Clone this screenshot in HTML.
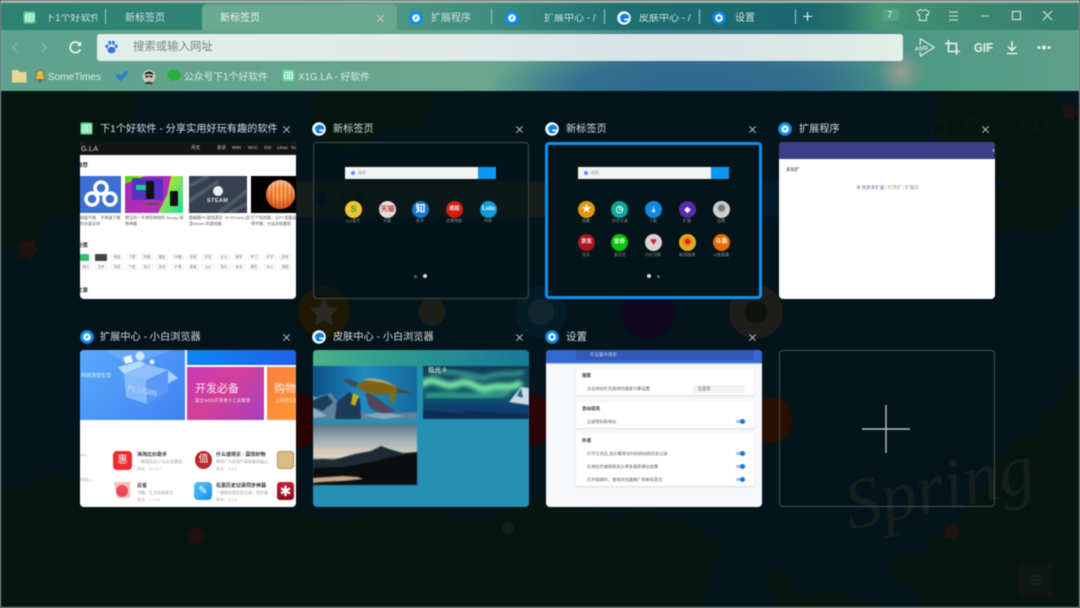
<!DOCTYPE html>
<html lang="zh"><head><meta charset="utf-8"><title>下1个好软件</title>
<style>
*{box-sizing:border-box}
html,body{margin:0;padding:0;background:#04151a}
#p{position:relative;width:1080px;height:608px;overflow:hidden;font-family:"Liberation Sans","Noto Sans CJK SC",sans-serif;filter:blur(.5px);background:#04151a}
.a,.t,.x{position:absolute}
.t{white-space:nowrap;line-height:1}
.ti{font-size:10.2px;color:#d8dcdc;top:125px}
.card{position:absolute;width:216px;height:157px;border-radius:4px;overflow:hidden}
.tab{font-size:10px;color:#cfe0dc;top:14px}
.sep{position:absolute;top:9px;width:1px;height:15px;background:#a5c8c0}
.lab{position:absolute;font-size:4px;color:#8a9496;line-height:1;white-space:nowrap;transform:translateX(-50%)}
.c{position:absolute;width:17px;height:17px;border-radius:50%;color:#fff;font-size:7px;font-weight:bold;text-align:center;line-height:17px}
.sb{position:absolute;height:12px;width:151px;background:#f2f4f4}
.sb b{position:absolute;right:0;top:0;width:18px;height:12px;background:#0a98f2}
.sb i{position:absolute;left:6px;top:4px;width:4px;height:4px;border-radius:50%;background:#6d8cf0}
.sb span{position:absolute;left:13px;top:4px;font-size:4px;line-height:1;color:#999;font-style:normal}
.tx{position:absolute;font-size:4.6px;line-height:1;color:#555;white-space:nowrap}
.tg{position:absolute;width:12px;height:6px;border:1px solid #eee;font-size:3.5px;line-height:4px;text-align:center;color:#777;border-radius:1px}
.sec{position:absolute;left:30px;width:178px;background:#fff;box-shadow:0 1px 2px rgba(0,0,0,.12)}
.sw{position:absolute;right:9px;width:9px;height:3px;border-radius:2px;background:#9cc0f4}
.sw:after{content:"";position:absolute;right:0;top:-1px;width:5px;height:5px;border-radius:50%;background:#1a73e8}
.ph{filter:blur(.5px)}
</style></head><body><div id="p">

<svg width="0" height="0" style="position:absolute"><defs>
<symbol id="ib" viewBox="0 0 14 14"><circle cx="7" cy="7" r="6.8" fill="#0a8cf5"/><circle cx="7" cy="7" r="3.8" fill="#fff"/><path d="M8.8 5.2 7.7 7.7 5.2 8.8 6.3 6.3z" fill="#0a8cf5"/></symbol>
<symbol id="ie" viewBox="0 0 14 14"><circle cx="7" cy="7" r="6.8" fill="#f4fbff"/><path d="M2.4 8.3C2.6 4.2 6 2.2 9 2.9c2.4.6 3.4 2.7 3 4.6H6.6c.2 1.7 2.6 2.6 5 1.4-1.200 2.300-4.700 3.300-6.800 1.800-1.500-1-1.600-3-.4-4.400-.8.500-1.500 1.300-2 2.000z" fill="#0b7fe0"/></symbol>
<symbol id="ig" viewBox="0 0 14 14"><circle cx="7" cy="7" r="6.8" fill="#0a86f0"/><path d="M7 2.800 10.600 4.900V9.100L7 11.200 3.400 9.100V4.900z" fill="#fff"/><circle cx="7" cy="7" r="1.700" fill="#0a86f0"/></symbol>
<symbol id="ix" viewBox="0 0 14 14"><rect x=".5" y=".5" width="13" height="13" rx="2" fill="#5ed29a"/><path d="M4 3.500h6a1 1 0 0 1 1 1v5a1 1 0 0 1-1 1H4a1 1 0 0 1-1-1v-5a1 1 0 0 1 1-1z" fill="none" stroke="#fff" stroke-width="1.200"/><circle cx="7" cy="7" r="1.600" fill="none" stroke="#fff" stroke-width="1"/></symbol>
<symbol id="cl" viewBox="0 0 10 10"><path d="M1.500 1.500l7 7M8.500 1.500l-7 7" stroke="#c9cfcf" stroke-width="1" fill="none"/></symbol>
</defs></svg>

<!-- dark background art -->
<svg class="a" style="left:0;top:91px" width="1080" height="517" viewBox="0 91 1080 517">
<rect x="0" y="91" width="1080" height="517" fill="#03141a"/>
<g fill="#06150f">
<circle cx="30" cy="130" r="55"/><circle cx="95" cy="105" r="40"/><circle cx="15" cy="210" r="36"/><circle cx="60" cy="195" r="24"/>
<circle cx="350" cy="110" r="38"/><circle cx="400" cy="100" r="30"/>
<circle cx="1000" cy="120" r="62"/><circle cx="1060" cy="160" r="48"/><circle cx="1040" cy="200" r="32"/><circle cx="1000" cy="210" r="22"/>
<path d="M0 490C30 480 50 490 70 500C90 480 130 480 170 505C230 520 280 500 330 520C380 510 420 500 480 525C540 480 580 510 620 520C640 500 690 520 720 545L700 608H0z"/>
<circle cx="25" cy="500" r="14"/><circle cx="50" cy="490" r="16"/><circle cx="72" cy="492" r="13"/>
<path d="M410 608C410 560 440 530 480 545C500 515 540 520 560 535C590 520 620 525 640 550L700 608z"/>
<path d="M915 608C920 560 940 545 950 535C960 510 990 480 1010 470C1030 460 1020 440 1035 440C1050 420 1060 410 1060 395C1070 380 1080 380 1080 378V608z"/>
<circle cx="1030" cy="455" r="22"/><circle cx="1055" cy="425" r="16"/><circle cx="1075" cy="400" r="14"/><circle cx="1072" cy="385" r="9"/>
<circle cx="1010" cy="470" r="18"/><circle cx="950" cy="555" r="24"/><circle cx="932" cy="575" r="20"/>
<path d="M770 608c8-16 20-18 28-8 6-8 16-8 22 0 8-12 20-14 30 0 10-6 20-2 28 8z"/>
<circle cx="910" cy="572" r="18"/><circle cx="785" cy="590" r="14"/><circle cx="775" cy="578" r="8"/>
</g>
<!-- search band -->
<rect x="296" y="181" width="429" height="36" fill="#161d1a"/>
<rect x="725" y="181" width="68" height="36" fill="#031a28"/>
<circle cx="752" cy="198" r="5" fill="none" stroke="#122020" stroke-width="1.500"/>
<circle cx="321" cy="198" r="6" fill="#06102a"/>
<text x="340" y="203" font-size="13" fill="#0a1412" font-family="Liberation Sans,Noto Sans CJK SC,sans-serif">搜索</text>
<!-- faint app icons -->
<circle cx="324" cy="312" r="26" fill="#1f1804"/><path d="M324 298l4.500 9 10 1.400-7.200 7 1.700 10-9-4.700-9 4.700 1.700-10-7.200-7 10-1.400z" fill="#2a2925"/>
<circle cx="432" cy="312" r="14" fill="#1d1d19"/>
<circle cx="541" cy="312" r="26" fill="#041b28"/><circle cx="541" cy="312" r="13" fill="#122630"/>
<circle cx="648" cy="312" r="27" fill="#0f0820"/>
<circle cx="756" cy="312" r="27" fill="#1d1d1b"/><circle cx="756" cy="312" r="11" fill="#0e1310"/>
<circle cx="296" cy="420" r="27" fill="#280404"/>
<circle cx="770" cy="420" r="23" fill="#280f02"/>
<circle cx="530" cy="420" r="26" fill="#2a0606"/>
<circle cx="508" cy="528" r="6" fill="#151f1b"/>
<path d="M190 525l6 4 5-3 1 6 5 4-5 3-2 6-6-3-6 1 1-6-4-5 6-1z" fill="#1f1210"/>
<path d="M20 238l8 4 6-3 1 7 5 5-6 3-3 7-6-4-7 1 2-7-4-6 6-1z" fill="#1f1210"/>
<path d="M945 523l6 3 5-2 1 5 4 4-4 3-2 5-5-3-5 1 1-5-3-5 5-1z" fill="#1f1210"/>
<path d="M1063 103l6 3 5-2 1 5 4 4-4 3-2 5-5-3-5 1 1-5-3-5 5-1z" fill="#1f1210"/>
<rect x="1018" y="563" width="34" height="34" fill="#0f1613"/>
<path d="M1030 576h12M1030 580h12M1030 584h12" stroke="#232925" stroke-width="1"/>
<path d="M931 126l8-7 8 7v8h-16z" fill="none" stroke="#191610" stroke-width="1.500"/>
<circle cx="971" cy="123" r="5" fill="none" stroke="#0f1814" stroke-width="1.500"/>
<text x="1017" y="129" font-size="12" fill="#131a15" font-family="Liberation Sans,Noto Sans CJK SC,sans-serif">个性化</text>
<text x="850" y="530" font-size="72" font-style="italic" fill="#161f1e" font-family="Liberation Serif,serif" transform="rotate(-12 850 530)">Spring</text>
</svg>

<!-- top chrome -->
<div class="a" style="left:0;top:0;width:1080px;height:91px;background:
radial-gradient(ellipse 24px 24px at 901px 72px,rgba(170,160,150,.75),rgba(170,160,150,0) 100%),
radial-gradient(ellipse 200px 50px at 690px 88px,#2f6a90 0,rgba(47,106,144,.85) 55%,rgba(47,106,144,0) 100%),
linear-gradient(90deg,#5ea28e 0,#67a58f 350px,#6aa78f 480px,#5a9c8c 560px,#44858c 640px,#417f8a 820px,#4f9a84 930px,#5f9f8a 1080px)"></div>
<div class="a" style="left:0;top:3px;width:1080px;height:27px;background:linear-gradient(90deg,#2e8272 0,#2f8474 200px,#4c9683 400px,#3f8e80 480px,#1f7072 620px,#1a676e 800px,#25716e 840px,#489878 880px,#3e8c72 930px,#35806f 1080px)"></div>
<div class="a" style="left:0;top:0;width:1080px;height:3px;background:#9fb0a8"></div>
<div class="a" style="left:0;top:0;width:1px;height:608px;background:#9aa09c"></div>
<div class="a" style="right:0;top:0;width:1px;height:608px;background:#9aa09c"></div>
<div class="a" style="left:0;bottom:0;width:1080px;height:1px;background:#9aa09c"></div>

<!-- tabs -->
<div class="a" style="left:202px;top:4px;width:195px;height:27px;background:#69a990;border-radius:5px 5px 0 0"></div>
<svg class="a" style="left:23px;top:11px" width="13" height="13"><use href="#ix"/></svg>
<div class="t tab" style="left:45px;width:52px;overflow:hidden">下1个好软件</div>
<div class="sep" style="left:105px"></div>
<div class="t tab" style="left:125px">新标签页</div>
<div class="t tab" style="left:220px;color:#eef5f2">新标签页</div>
<svg class="a" style="left:376px;top:14px" width="9" height="9"><use href="#cl"/></svg>
<svg class="a" style="left:409px;top:11px" width="14" height="14"><use href="#ib"/></svg>
<div class="t tab" style="left:431px">扩展程序</div>
<div class="sep" style="left:491px"></div>
<svg class="a" style="left:505px;top:11px" width="14" height="14"><use href="#ib"/></svg>
<div class="t tab" style="left:544px;width:55px;overflow:hidden">扩展中心 - /</div>
<div class="sep" style="left:604px"></div>
<svg class="a" style="left:617px;top:11px" width="14" height="14"><use href="#ie"/></svg>
<div class="t tab" style="left:639px;width:55px;overflow:hidden">皮肤中心 - /</div>
<div class="sep" style="left:699px"></div>
<svg class="a" style="left:712px;top:11px" width="14" height="14"><use href="#ig"/></svg>
<div class="t tab" style="left:735px">设置</div>
<div class="sep" style="left:795px"></div>
<svg class="a" style="left:802px;top:11px" width="11" height="11"><path d="M5.500 1v9M1 5.500h9" stroke="#f0f5f3" stroke-width="1.100"/></svg>
<div class="a" style="left:883px;top:9px;width:16px;height:12px;background:#56a088"></div>
<div class="t" style="left:887px;top:11px;font-size:10px;color:#e8f0ec">7</div>
<svg class="a" style="left:916px;top:8px" width="14" height="14" viewBox="0 0 14 14"><path d="M4.500 1.500 1 3.500l1 3.500 1.500-.5V12.500h7V6.500l1.500.5 1-3.500-3.500-2c-.5 1.500-4 1.500-4.500 0z" fill="none" stroke="#dfe9e5" stroke-width="1"/></svg>
<svg class="a" style="left:948px;top:10px" width="11" height="12"><path d="M1 2h9M1 6h9M1 10h9" stroke="#d5e2de" stroke-width="1.100"/></svg>
<svg class="a" style="left:980px;top:10px" width="10" height="12"><path d="M1 6h8" stroke="#b7d0ca" stroke-width="1"/></svg>
<svg class="a" style="left:1011px;top:10px" width="11" height="11"><rect x="1.500" y="1.500" width="8" height="8" fill="none" stroke="#dbe7e3" stroke-width="1.100"/></svg>
<svg class="a" style="left:1042px;top:10px" width="11" height="11"><path d="M1 1l9 9M10 1l-9 9" stroke="#dbe7e3" stroke-width="1"/></svg>

<!-- toolbar -->
<svg class="a" style="left:10px;top:41px" width="10" height="13"><path d="M7.500 2 2.500 6.500 7.500 11" fill="none" stroke="#82b5a6" stroke-width="1.200"/></svg>
<svg class="a" style="left:39px;top:41px" width="10" height="13"><path d="M2.500 2 7.500 6.500 2.500 11" fill="none" stroke="#82b5a6" stroke-width="1.200"/></svg>
<svg class="a" style="left:68px;top:40px" width="15" height="15" viewBox="0 0 15 15"><path d="M12.300 9.500A5.300 5.300 0 1 1 11.500 3.900" fill="none" stroke="#eef5f2" stroke-width="1.700"/><path d="M13.200 1.500V6H8.800z" fill="#eef5f2"/></svg>
<div class="a" style="left:97px;top:34px;width:806px;height:27px;border-radius:3px;background:linear-gradient(90deg,#e2efe9 0,#e0ebe8 300px,#d8e3e8 580px,#dde8e6 700px,#e3efe8 806px)"></div>
<svg class="a" style="left:105px;top:40px" width="13" height="14" viewBox="0 0 13 14" fill="#3f6fe8"><ellipse cx="6.500" cy="10" rx="3.900" ry="3.300"/><ellipse cx="4.800" cy="2.800" rx="1.400" ry="2.100"/><ellipse cx="8.400" cy="2.800" rx="1.400" ry="2.100"/><ellipse cx="1.800" cy="6.300" rx="1.400" ry="1.900"/><ellipse cx="11.200" cy="6.300" rx="1.400" ry="1.900"/></svg>
<div class="t" style="left:133px;top:42px;font-size:11.400px;color:#7d8685">搜索或输入网址</div>
<svg class="a" style="left:914px;top:37px" width="22" height="21" viewBox="0 0 22 21"><path d="M6 8 6.500 1.800 20 10.500 6.500 19 6 15" fill="none" stroke="#e0ece8" stroke-width="1.200"/><text x="1" y="13" font-size="5.500" font-weight="bold" fill="#e8f2ee" font-family="Liberation Sans,sans-serif" transform="rotate(-6 8 12)">ASSI</text></svg>
<svg class="a" style="left:945px;top:40px" width="15" height="15" viewBox="0 0 15 15"><path d="M3.500 0v11.500H15M0 3.500h11.500V15" fill="none" stroke="#e8f2ee" stroke-width="1.600"/></svg>
<div class="t" style="left:974px;top:41px;font-size:13px;font-weight:bold;color:#e4efeb;transform:scaleX(.88);transform-origin:0 0">GIF</div>
<svg class="a" style="left:1005px;top:40px" width="14" height="15" viewBox="0 0 14 15"><path d="M7 1v9M3 6.500 7 10.500 11 6.500M2 13.500h10" fill="none" stroke="#e8f2ee" stroke-width="1.500"/></svg>
<svg class="a" style="left:1036px;top:44px" width="16" height="7"><circle cx="3" cy="3.500" r="1.500" fill="#e8f2ee"/><circle cx="8" cy="3.500" r="2" fill="#e8f2ee"/><circle cx="13" cy="3.500" r="1.500" fill="#e8f2ee"/></svg>

<!-- bookmarks -->
<svg class="a" style="left:12px;top:69px" width="15" height="14"><path d="M0 1h6l1.500 2H14.500V13.500H0z" fill="#e6d894"/></svg>
<svg class="a" style="left:34px;top:70px" width="12" height="13" viewBox="0 0 12 13"><path d="M6 .5c2.500 0 3.500 2 3.500 4.500 0 2.500 1.500 3.500 1.500 4.500H1C1 8.500 2.500 7.500 2.500 5 2.500 2.500 3.500.5 6 .5z" fill="#eabb3c" stroke="#7a6424" stroke-width=".7"/><circle cx="6" cy="11" r="1.300" fill="#7a6424"/></svg>
<div class="t" style="left:48px;top:73px;font-size:10px;color:#dcebe5">SomeTimes</div>
<svg class="a" style="left:115px;top:70px" width="14" height="13" viewBox="0 0 14 13"><path d="M.5 6 3.500 3.500 6 6 11 .5 13.500 2.500 6 11.500z" fill="#2f7fd0"/></svg>
<svg class="a" style="left:142px;top:69px" width="14" height="15" viewBox="0 0 14 15"><circle cx="7" cy="7.500" r="6.500" fill="#c9c6b4"/><path d="M2.500 6C3 1.500 11 1.500 11.500 6 9 4.500 5 4.500 2.500 6z" fill="#1c1c1c"/><rect x="3.500" y="6.500" width="3" height="2" fill="#333"/><rect x="7.500" y="6.500" width="3" height="2" fill="#333"/><path d="M3 15c0-3 8-3 8 0z" fill="#333"/></svg>
<svg class="a" style="left:167px;top:69px" width="14" height="13" viewBox="0 0 14 13"><ellipse cx="7" cy="6" rx="6.800" ry="5.500" fill="#2aae3c"/><path d="M3 10v3l3-2z" fill="#2aae3c"/></svg>
<div class="t" style="left:184px;top:73px;font-size:9.800px;color:#dcebe5">公众号下1个好软件</div>
<svg class="a" style="left:282px;top:69px" width="13" height="13"><use href="#ix"/></svg>
<div class="t" style="left:298px;top:73px;font-size:9.800px;color:#dcebe5">X1G.LA - 好软件</div>

<!-- titles row 1 -->
<svg class="a" style="left:80px;top:122px" width="13" height="13"><use href="#ix"/></svg>
<div class="t ti" style="left:100px">下1个好软件 - 分享实用好玩有趣的软件</div>
<svg class="a" style="left:282px;top:125px" width="9" height="9"><use href="#cl"/></svg>
<svg class="a" style="left:312px;top:122px" width="14" height="14"><use href="#ie"/></svg>
<div class="t ti" style="left:333px">新标签页</div>
<svg class="a" style="left:515px;top:125px" width="9" height="9"><use href="#cl"/></svg>
<svg class="a" style="left:545px;top:122px" width="14" height="14"><use href="#ie"/></svg>
<div class="t ti" style="left:566px">新标签页</div>
<svg class="a" style="left:748px;top:125px" width="9" height="9"><use href="#cl"/></svg>
<svg class="a" style="left:778px;top:122px" width="14" height="14"><use href="#ib"/></svg>
<div class="t ti" style="left:799px">扩展程序</div>
<svg class="a" style="left:981px;top:125px" width="9" height="9"><use href="#cl"/></svg>

<!-- titles row 2 -->
<svg class="a" style="left:80px;top:330px" width="14" height="14"><use href="#ib"/></svg>
<div class="t ti" style="left:100px;top:333px">扩展中心 - 小白浏览器</div>
<svg class="a" style="left:282px;top:333px" width="9" height="9"><use href="#cl"/></svg>
<svg class="a" style="left:312px;top:330px" width="14" height="14"><use href="#ie"/></svg>
<div class="t ti" style="left:333px;top:333px">皮肤中心 - 小白浏览器</div>
<svg class="a" style="left:515px;top:333px" width="9" height="9"><use href="#cl"/></svg>
<svg class="a" style="left:545px;top:330px" width="14" height="14"><use href="#ig"/></svg>
<div class="t ti" style="left:566px;top:332px;font-size:10.500px">设置</div>
<svg class="a" style="left:748px;top:333px" width="9" height="9"><use href="#cl"/></svg>

<!-- card 1 -->
<div class="card" style="left:80px;top:142px;background:#fff">
<div class="a" style="left:0;top:0;width:216px;height:13px;background:#141414"></div>
<div class="t" style="left:1px;top:3px;font-size:7.500px;color:#d8d8d8">G.LA</div>
<div class="t" style="left:111px;top:4px;font-size:4.500px;color:#ccc">月花</div>
<div class="t" style="left:137px;top:4px;font-size:4.500px;color:#ccc">安卓</div>
<div class="t" style="left:152px;top:4px;font-size:4.500px;color:#ccc">WIN</div>
<div class="t" style="left:168px;top:4px;font-size:4.500px;color:#ccc">MAC</div>
<div class="t" style="left:184px;top:4px;font-size:4.500px;color:#ccc">iOS</div>
<div class="t" style="left:197px;top:4px;font-size:4.500px;color:#ccc">Linux</div>
<div class="t" style="left:211px;top:4px;font-size:4.500px;color:#ccc">Soft</div>
<div class="t" style="left:-3px;top:22px;font-size:5.500px;font-weight:bold;color:#333">推荐</div>
<div class="a" style="left:0;top:34px;width:41px;height:37px;background:#3d70d2"><svg width="41" height="37" viewBox="0 0 41 37"><g fill="none" stroke="#fff" stroke-width="3.500"><circle cx="12" cy="23" r="6"/><circle cx="30" cy="23" r="6"/><circle cx="21" cy="12" r="6"/></g></svg></div>
<div class="a" style="left:45px;top:34px;width:58px;height:37px;overflow:hidden;background:linear-gradient(120deg,#4ad317 0,#b6e815 35%,#e4e310 45%,#12e0a0 100%)"><svg width="58" height="37"><path d="M20 0H46L42 19 33 37H0V8z" fill="#b018c8" opacity=".9"/><rect x="7" y="2" width="31" height="22" rx="1" fill="#5232c0"/><rect x="11" y="9" width="16" height="5" fill="#1ccb9a"/><rect x="21" y="5" width="8" height="18" rx="1" fill="#111"/><rect x="45" y="15" width="8" height="15" rx="1" fill="#111"/><path d="M20 28H34" stroke="#555" stroke-width="2"/></svg></div>
<div class="a" style="left:109px;top:34px;width:58px;height:37px;background:#36404e"><svg width="58" height="37"><path d="M0 10 20 0M0 25 30 5M30 37 58 15M40 37 58 28" stroke="#4d5a68" stroke-width="4"/><circle cx="29" cy="15" r="5" fill="#eee"/></svg><div class="t" style="left:18px;top:23px;font-size:5.500px;font-weight:bold;color:#e4e4e4;letter-spacing:.4px">STEAM</div></div>
<div class="a" style="left:171px;top:34px;width:45px;height:37px;background:#000"><div class="a" style="left:15px;top:4px;width:29px;height:29px;border-radius:50%;background:repeating-linear-gradient(90deg,#f2791f 0 3px,#fbd2a8 3px 4px);box-shadow:inset 0 -6px 8px rgba(200,60,0,.7),inset 0 4px 6px rgba(255,255,255,.4)"></div></div>
<div class="tx" style="left:0;top:74px;font-size:4px">网盘不限... 不限速下载</div><div class="tx" style="left:0;top:80px;font-size:4px">的全面支持</div>
<div class="tx" style="left:45px;top:74px;font-size:4px">想当你一手神奇神到听 Scrcpy 投</div><div class="tx" style="left:45px;top:80px;font-size:4px">券神器</div>
<div class="tx" style="left:109px;top:74px;font-size:4px">超级酷PC游戏清空（F:XCrons )自</div><div class="tx" style="left:109px;top:80px;font-size:4px">游Steam 的游戏箱</div>
<div class="tx" style="left:171px;top:74px;font-size:4px">打个短线器：让PT流量运</div><div class="tx" style="left:171px;top:80px;font-size:4px">得早期，力运发挥圈到</div>
<div class="t" style="left:-3px;top:102px;font-size:5.500px;font-weight:bold;color:#333">分类</div>
<div class="a" style="left:0;top:112px;width:9px;height:7px;background:#2dc36a;border-radius:1px"></div>
<div class="a" style="left:15px;top:112px;width:12px;height:7px;background:#444;border-radius:1px"></div>
<div class="tg" style="left:31px;top:112px">电影</div><div class="tg" style="left:46px;top:112px">下载</div><div class="tg" style="left:61px;top:112px">网盘</div><div class="tg" style="left:76px;top:112px">播放</div><div class="tg" style="left:92px;top:112px">IM器</div><div class="tg" style="left:107px;top:112px">系统</div><div class="tg" style="left:122px;top:112px">开发</div><div class="tg" style="left:138px;top:112px">办公</div><div class="tg" style="left:153px;top:112px">美学</div><div class="tg" style="left:168px;top:112px">学习</div><div class="tg" style="left:184px;top:112px">杜学</div><div class="tg" style="left:199px;top:112px">游戏</div>
<div class="tg" style="left:0;top:122px">图片</div><div class="tg" style="left:15px;top:122px">文件</div><div class="tg" style="left:31px;top:122px">浏览</div><div class="tg" style="left:46px;top:122px">个性</div><div class="tg" style="left:61px;top:122px">笔记</div><div class="tg" style="left:76px;top:122px">资讯</div><div class="tg" style="left:92px;top:122px">扩展</div><div class="tg" style="left:107px;top:122px">桌面</div><div class="tg" style="left:122px;top:122px">App</div><div class="tg" style="left:138px;top:122px">音乐</div><div class="tg" style="left:153px;top:122px">安全</div><div class="tg" style="left:168px;top:122px">硬件</div><div class="tg" style="left:184px;top:122px">办公</div><div class="tg" style="left:199px;top:122px">视频</div>
<div class="t" style="left:-3px;top:147px;font-size:5.500px;font-weight:bold;color:#333">文章</div>
</div>

<!-- card 2 -->
<div class="card" style="left:313px;top:142px;border:1px solid #3e4a4c;background:rgba(3,21,25,.62)"></div>
<div class="sb" style="left:345px;top:167px"><i></i><span>搜索</span><b></b></div>
<div class="c" style="left:345px;top:201px;background:#f1c232;color:#2aa53c;font-size:9px">S</div>
<div class="c" style="left:379px;top:201px;background:#e2dfdc;color:#c83a3a">天猫</div>
<div class="c" style="left:412px;top:201px;background:#1277d0;font-size:10px">知</div>
<div class="c" style="left:446px;top:201px;background:#d0200c;font-size:5px">携程</div>
<div class="c" style="left:480px;top:201px;background:#0f9bd6;font-size:6px">Lulu</div>
<div class="lab" style="left:353px;top:219px">QQ音乐</div><div class="lab" style="left:387px;top:219px">天猫</div><div class="lab" style="left:420px;top:219px">知乎</div><div class="lab" style="left:454px;top:219px">去哪网盘</div><div class="lab" style="left:488px;top:219px">哔哩</div>
<div class="a" style="left:414px;top:275px;width:3px;height:3px;border-radius:50%;background:#56666a"></div>
<div class="a" style="left:423px;top:274px;width:4px;height:4px;border-radius:50%;background:#d4dadb"></div>

<!-- card 3 -->
<div class="card" style="left:545px;top:142px;width:217px;border:3px solid #0a93f0;background:#041519"></div>
<div class="sb" style="left:578px;top:167px"><i></i><span>搜索</span><b></b></div>
<div class="c" style="left:578px;top:201px;background:#e2960c;font-size:10px">★</div>
<div class="c" style="left:611px;top:201px;background:#0ea79c;font-size:9px">◷</div>
<div class="c" style="left:645px;top:201px;background:#1487d8;font-size:8px">⤓</div>
<div class="c" style="left:679px;top:201px;background:#5a2ba8;font-size:8px">◈</div>
<div class="c" style="left:713px;top:201px;background:#cfcfcf;color:#777;font-size:11px">✹</div>
<div class="c" style="left:578px;top:234px;background:#ae1420;font-size:5.500px">京东</div>
<div class="c" style="left:611px;top:234px;background:#07c50c;font-size:5.500px;color:#fff">爱奇</div>
<div class="c" style="left:645px;top:234px;background:#d9d2d0;color:#c4283c;font-size:11px">♥</div>
<div class="c" style="left:679px;top:234px;background:#e6ab1c;color:#d81e1e;font-size:9px">◉</div>
<div class="c" style="left:713px;top:234px;background:#e36c04;font-size:6px">斗鱼</div>
<div class="lab" style="left:586px;top:219px">收藏</div><div class="lab" style="left:620px;top:219px">历史记录</div><div class="lab" style="left:653px;top:219px">下载</div><div class="lab" style="left:687px;top:219px">扩展</div><div class="lab" style="left:721px;top:219px">设置</div>
<div class="lab" style="left:586px;top:253px">京东</div><div class="lab" style="left:620px;top:253px">爱奇艺</div><div class="lab" style="left:653px;top:253px">小红书网</div><div class="lab" style="left:687px;top:253px">新浪微博</div><div class="lab" style="left:721px;top:253px">斗鱼直播</div>
<div class="a" style="left:647px;top:274px;width:4px;height:4px;border-radius:50%;background:#d4dadb"></div>
<div class="a" style="left:657px;top:275px;width:3px;height:3px;border-radius:50%;background:#56666a"></div>

<!-- card 4 -->
<div class="card" style="left:779px;top:142px;background:#fff">
<div class="a" style="left:0;top:0;width:216px;height:17px;background:#3c3f86"></div>
<div class="a" style="left:214px;top:7px;width:1px;height:3px;background:#cfd0e4"></div>
<div class="t" style="left:7px;top:26px;font-size:4.500px;color:#333">未知扩</div>
<div class="t" style="left:77px;top:44px;font-size:4.500px;color:#7a5aa8">寻 找更多扩展<span style="color:#888">  / 打开扩 / 扩展页</span></div>
</div>

<!-- card 5 -->
<div class="card" style="left:80px;top:350px;background:#fff">
<div class="a" style="left:0;top:0;width:105px;height:70px;background:linear-gradient(135deg,#5aa8fb,#3f83f2)"><svg width="105" height="70" viewBox="0 0 105 70"><path d="M25 0 50 16 92 0z" fill="#7cb8fd" opacity=".5"/><path d="M44 24 66 30 88 20 66 14z" fill="#8dc0fc"/><path d="M44 24 38 17 60 11 66 14z" fill="#b8dafe"/><path d="M88 20 98 28 84 36 76 27z" fill="#a8d0fd"/><path d="M44 24 66 30 67 54 46 47z" fill="#86bbfa"/><path d="M66 30 88 20 88 42 67 54z" fill="#5a97f6"/><rect x="44" y="6" width="8" height="7" fill="#eef6ff" transform="rotate(-15 48 9)"/><circle cx="60" cy="6" r="4.500" fill="#cfe6ff"/><circle cx="72" cy="12" r="2.500" fill="#e4f1ff"/><text x="47" y="40" font-size="8" font-weight="bold" fill="#a9cffc" font-family="Liberation Sans,sans-serif" transform="rotate(12 47 40)">PLUGIN</text></svg><div class="t" style="left:1px;top:24px;font-size:5px;color:#e8f3ff">科技改变生活</div></div>
<div class="a" style="left:107px;top:0;width:109px;height:15px;background:linear-gradient(90deg,#0b88f0,#2060ec)"></div>
<div class="a" style="left:107px;top:17px;width:77px;height:53px;background:linear-gradient(135deg,#c83ab8 0,#d24098 45%,#a93fc0 100%)"><div class="t" style="left:8px;top:17px;font-size:11px;color:#fbe8f4">开发必备</div><div class="t" style="left:8px;top:32px;font-size:4.500px;color:#f5d8ee">最全WEB开发者小工具集锦</div></div>
<div class="a" style="left:187px;top:17px;width:29px;height:53px;background:linear-gradient(135deg,#fb7a40,#ff9a34);overflow:hidden"><div class="t" style="left:7px;top:17px;font-size:11px;color:#ffeedd">购物神器</div><div class="t" style="left:8px;top:32px;font-size:4.500px;color:#ffe6d0">上网更实惠</div></div>
<div class="tx" style="left:0;top:103px;font-size:4px;color:#aaa">yrro...</div>
<div class="a" style="left:33px;top:101px;width:19px;height:19px;background:#ee2b2f;border-radius:4px;color:#fff;font-size:10px;line-height:19px;text-align:center">惠</div>
<div class="tx" style="left:57px;top:103px;font-size:5px;color:#333;font-weight:bold">海淘比价助手</div>
<div class="tx" style="left:57px;top:110px;font-size:4px;color:#999">一款国货出口 比价优惠领...</div>
<div class="tx" style="left:57px;top:117px;font-size:4px;color:#aaa">版本：4.2.3.7</div>
<div class="a" style="left:115px;top:101px;width:17px;height:18px;background:#b6282a;border-radius:50%;color:#fff;font-size:10px;line-height:18px;text-align:center">值</div>
<div class="tx" style="left:136px;top:103px;font-size:5px;color:#333;font-weight:bold">什么值得买 · 震惊好物</div>
<div class="tx" style="left:136px;top:110px;font-size:4px;color:#999">帮你广大的用户高效省钱省心...</div>
<div class="tx" style="left:136px;top:117px;font-size:4px;color:#aaa">版本：3.2.2</div>
<div class="a" style="left:197px;top:101px;width:17px;height:18px;background:#d9bd82;border:1px solid #b08d4c;border-radius:3px"></div>
<div class="tx" style="left:0;top:128px;font-size:4px;color:#aaa">的插入...</div>
<div class="a" style="left:34px;top:132px;width:16px;height:16px;background:#f8bdbd;clip-path:polygon(0 0,100% 0,100% 100%,20% 100%)"></div>
<div class="a" style="left:36px;top:135px;width:12px;height:12px;background:#e84c5c;border-radius:50%"></div>
<div class="tx" style="left:57px;top:134px;font-size:5px;color:#333;font-weight:bold">云雀</div>
<div class="tx" style="left:57px;top:141px;font-size:4px;color:#999">书籍，生活化阅读法</div>
<div class="tx" style="left:57px;top:148px;font-size:4px;color:#aaa">版本：1.1.51</div>
<div class="a" style="left:114px;top:132px;width:18px;height:18px;background:linear-gradient(135deg,#54c4f6,#1a8eec);border-radius:4px;color:#fff;font-size:11px;line-height:18px;text-align:center">✎</div>
<div class="tx" style="left:136px;top:134px;font-size:5px;color:#333;font-weight:bold">石墨历史记录同步神器</div>
<div class="tx" style="left:136px;top:141px;font-size:4px;color:#999">一键保存到历史记录，同步备...</div>
<div class="tx" style="left:136px;top:148px;font-size:4px;color:#aaa">版本：3.1.3</div>
<div class="a" style="left:197px;top:132px;width:17px;height:18px;background:linear-gradient(#c52030,#8e1020);border-radius:3px;color:#fff;font-size:14px;line-height:18px;text-align:center">✱</div>
</div>

<!-- card 6 -->
<div class="card" style="left:313px;top:350px;background:#2490b4">
<div class="a" style="left:0;top:0;width:216px;height:16px;background:linear-gradient(90deg,#4db287 0,#2f9c90 35%,#157a99 100%)"></div>
<svg class="a ph" style="left:0;top:16px" width="104" height="53" viewBox="0 0 104 53"><defs><linearGradient id="sea" x1="0" y1="0" x2="1" y2="0"><stop offset="0" stop-color="#0d4f86"/><stop offset=".5" stop-color="#1d8cc2"/><stop offset="1" stop-color="#14689c"/></linearGradient></defs><rect width="104" height="53" fill="url(#sea)"/><path d="M0 32 18 27 28 40 58 48 104 46V53H0z" fill="#5f819c"/><path d="M0 30 8 34 4 44 14 50 0 52z" fill="#a8c0d0" opacity=".7"/><path d="M50 49 70 46 92 50 70 53z" fill="#a8c0d0" opacity=".6"/><path d="M24 36 36 26 47 33 48 53H22z" fill="#1d3a58"/><path d="M0 34 14 29 20 36 10 45 0 42z" fill="#1c3e5c"/><path d="M44 21C48 13 62 12 78 18 88 22 86 28 78 28 66 30 52 28 44 21z" fill="#7e6416"/><path d="M50 14C56 11 70 12 84 21 72 16 60 15 50 14z" fill="#bba878"/><path d="M29 14 37 13 46 17 42 22z" fill="#3e4e5c"/><path d="M52 27C58 26 66 34 82 45 72 50 60 46 56 40z" fill="#52465e"/><path d="M40 27 46 30 42 40 38 38z" fill="#c4b01c"/><path d="M78 26 84 29 80 38 76 34z" fill="#7a7024"/><path d="M84 22 100 27 84 27z" fill="#4a4a3c"/></svg>
<svg class="a ph" style="left:110px;top:16px" width="106" height="53" viewBox="0 0 106 53"><defs><linearGradient id="au" x1="0" y1="0" x2="0" y2="1"><stop offset="0" stop-color="#123a52"/><stop offset=".55" stop-color="#0f5a6c"/><stop offset=".8" stop-color="#0d3f70"/><stop offset="1" stop-color="#0a3a6c"/></linearGradient><filter id="bl"><feGaussianBlur stdDeviation="2"/></filter></defs><rect width="106" height="53" fill="url(#au)"/><g filter="url(#bl)" fill="none" stroke-linecap="round"><path d="M0 18C12 8 20 24 34 18S54 26 66 22 84 24 96 18" stroke="#78e8a8" stroke-width="7"/><path d="M10 6C22 4 40 8 62 12 74 6 88 10 100 6" stroke="#3aa8a0" stroke-width="4"/><path d="M4 30C20 28 50 32 84 28" stroke="#3ab890" stroke-width="4"/></g><path d="M86 36 98 21 106 22V39z" fill="#c8dce8"/><path d="M94 30 98 22 100 32z" fill="#2c5c80"/><path d="M0 41 40 45 106 48V53H0z" fill="#0c2c56"/><path d="M0 41 40 45V47L0 44z" fill="#1b3e66"/></svg>
<div class="t" style="left:115px;top:18px;font-size:6.500px;color:#e4f0f0">极光 9</div>
<svg class="a ph" style="left:0;top:74px" width="104" height="61" viewBox="0 0 104 61"><defs><linearGradient id="sk" x1="0" y1="0" x2="0" y2="1"><stop offset="0" stop-color="#5a7688"/><stop offset=".3" stop-color="#a9b6ba"/><stop offset=".55" stop-color="#e4d6c4"/><stop offset=".6" stop-color="#1c2a30"/></linearGradient></defs><rect width="104" height="61" fill="url(#sk)"/><rect x="0" y="25" width="50" height="1.500" fill="#f0c8a0" opacity=".7"/><path d="M0 36 10 35 20 36 42 30 58 27 68 22 76 25 90 29 104 28V46H0z" fill="#1d2c34"/><path d="M0 44 30 43 60 38 78 33 104 28V61H0z" fill="#0b0d0f"/><path d="M0 54 14 53 30 52 45 53 50 55 30 57 8 58 0 59z" fill="#c8a888"/></svg>
</div>

<!-- card 7 -->
<div class="card" style="left:546px;top:350px;background:#f6f8fb">
<div class="a" style="left:0;top:0;width:216px;height:13px;background:#3469d2"></div>
<div class="a" style="left:30px;top:0;width:178px;height:10px;background:#3258b8"></div>
<div class="a" style="left:0;top:13px;width:216px;height:1px;background:#b4bfd6"></div>
<div class="t" style="left:44px;top:3px;font-size:4.500px;color:#c0d0f0">在设置中搜索</div>
<div class="sec" style="top:20px;height:25px"></div>
<div class="t" style="left:36px;top:24px;font-size:4.500px;font-weight:bold;color:#333">搜索</div>
<div class="t" style="left:41px;top:37px;font-size:4.200px;color:#555">点击地址栏内选择的搜索引擎设置</div>
<div class="a" style="left:147px;top:35px;width:52px;height:8px;background:#f0f1f3"></div>
<div class="t" style="left:152px;top:37px;font-size:4.200px;color:#666">百度等</div>
<div class="sec" style="top:52px;height:26px"></div>
<div class="t" style="left:36px;top:57px;font-size:4.500px;font-weight:bold;color:#333">自动填充</div>
<div class="t" style="left:41px;top:70px;font-size:4.200px;color:#555">记录密码和地址</div>
<div class="sw" style="top:70px;right:17px"></div>
<div class="sec" style="top:84px;height:52px"></div>
<div class="t" style="left:36px;top:89px;font-size:4.500px;font-weight:bold;color:#333">外观</div>
<div class="t" style="left:41px;top:102px;font-size:4.200px;color:#555">打开主页后,显示最常访问的网站和历史记录</div>
<div class="sw" style="top:102px;right:17px"></div>
<div class="t" style="left:41px;top:115px;font-size:4.200px;color:#555">在地址栏搜索框显示更多搜索建议结果</div>
<div class="sw" style="top:115px;right:17px"></div>
<div class="t" style="left:41px;top:128px;font-size:4.200px;color:#555">打开链接时，使用浏览器推广的新标签页</div>
<div class="sw" style="top:128px;right:17px"></div>
</div>

<!-- card 8 -->
<div class="card" style="left:779px;top:350px;border:1px solid #455052"></div>
<svg class="a" style="left:862px;top:405px" width="48" height="48"><path d="M24 0v48M0 24h48" stroke="#b5bfbf" stroke-width="1.400"/></svg>

</div></body></html>
